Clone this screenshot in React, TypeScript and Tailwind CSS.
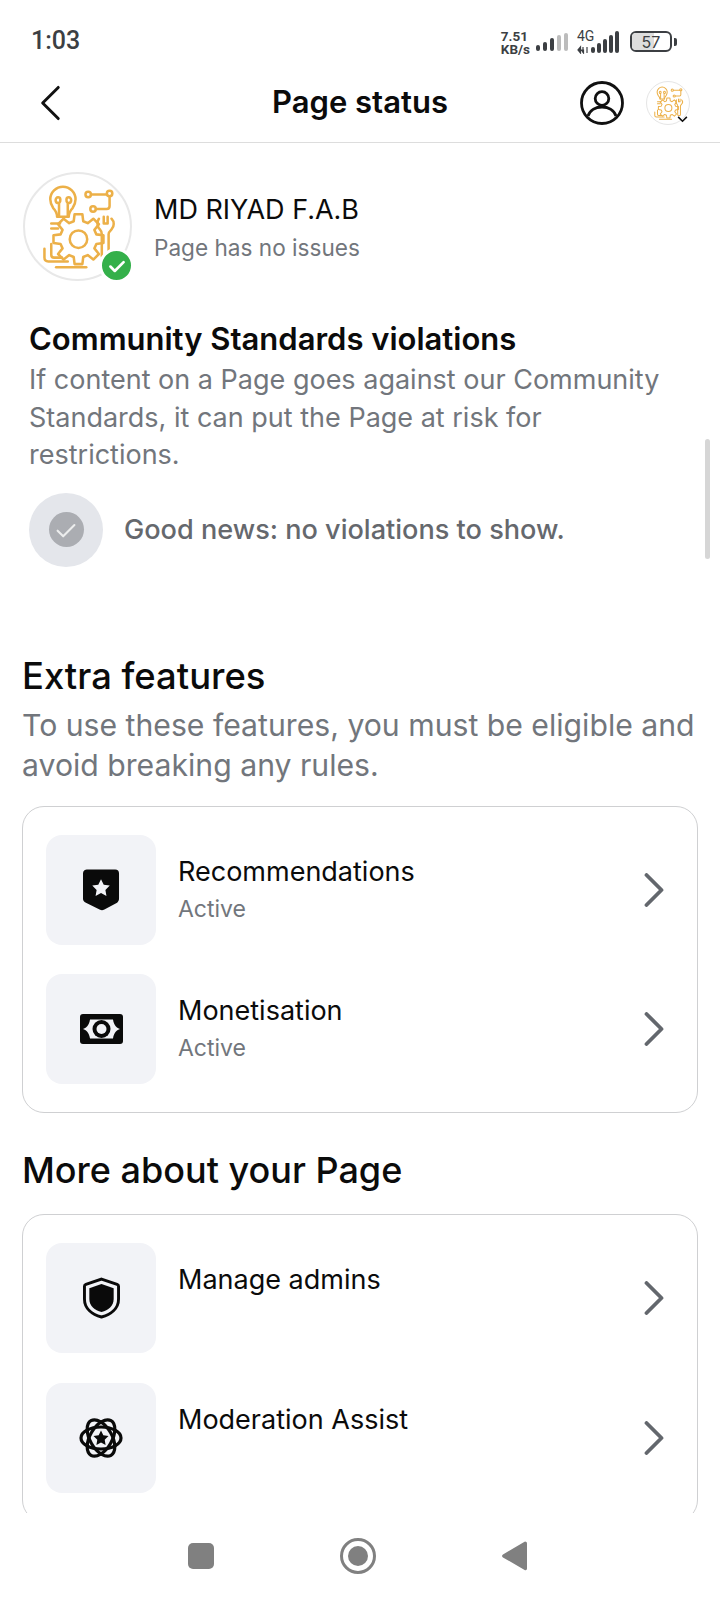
import type { ReactNode } from "react";

// builds the cog outline for the logo
function gearPath(cx: number, cy: number, outer: number, inner: number, teeth: number) {
  const pts: string[] = [];
  const step = (Math.PI * 2) / teeth;
  for (let i = 0; i < teeth; i++) {
    const a = i * step - Math.PI / 2;
    const offs: [number, number][] = [
      [-0.3, inner],
      [-0.18, outer],
      [0.18, outer],
      [0.3, inner],
    ];
    for (const [o, r] of offs) {
      const t = a + o * step * 1.1;
      pts.push(`${(cx + Math.cos(t) * r).toFixed(1)} ${(cy + Math.sin(t) * r).toFixed(1)}`);
    }
  }
  return "M" + pts.join("L") + "Z";
}

function PageLogo({ className }: { className: string }) {
  return (
    <svg viewBox="0 0 108 108" className={className} fill="none" stroke="#ecb048" strokeWidth="2.600" strokeLinecap="round" strokeLinejoin="round">
      {/* bulb */}
      <path d="M33 44c0-5-2-7-4-9-2-3-3-6-3-9 0-7 6-13 13-13s13 6 13 13c0 3-1 6-3 9-2 2-4 4-4 9z" />
      <path d="M35 44V30M44 44V30M35 30c-5 0-4-6-1-6s3 4 1 6zM44 30c5 0 4-6 1-6s-3 4-1 6z" />
      <path d="M27 51h9M27 56h7" />
      {/* circuit */}
      <circle cx="65" cy="21" r="2.800" />
      <circle cx="87" cy="20" r="2.800" />
      <circle cx="70" cy="36" r="2.800" />
      <path d="M68 21h16M73 36h11c2 0 3-1 3-3V23" />
      {/* gear */}
      <path d={gearPath(55, 67, 26, 19, 8)} />
      <circle cx="55" cy="67" r="9" />
      {/* wrench */}
      <path d="M76 46c-2 3-2 8 1 11 1 1 2 3 2 5v22M89 46c3 3 3 8 0 11-1 1-3 3-3 5v22M79 84c0 3 7 3 7 0" />
      <path d="M81 44v7h4v-7" />
      {/* traces */}
      <path d="M20 77v9c0 3 2 4 4 4h20" />
      <path d="M27 72v11c0 2 1 3 3 3h8" />
      <path d="M32 96h31" />
    </svg>
  );
}

function Row({ icon, title, sub }: { icon: ReactNode; title: string; sub?: string }) {
  return (
    <div className="flex items-center">
      <div className="flex h-[110px] w-[110px] shrink-0 items-center justify-center rounded-[16px] bg-[#f2f3f7]">{icon}</div>
      <div className="ml-[22px] h-[110px] flex-1 pt-[19px]">
        <div className="text-[27px] leading-[36px] text-[#0b0b0b]">{title}</div>
        {sub && <div className="mt-[1px] text-[23px] leading-[36px] text-[#72767c]">{sub}</div>}
      </div>
      <svg viewBox="0 0 20 34" className="mr-[33px] h-[34px] w-[20px] shrink-0" fill="none" stroke="#63676d" strokeWidth="3.800" strokeLinecap="round" strokeLinejoin="round">
        <path d="M2.500 2 17.500 17 2.500 32" />
      </svg>
    </div>
  );
}

export default function App() {
  return (
    <div className="relative flex h-[1600px] w-[720px] flex-col overflow-hidden bg-white font-['Inter','Noto_Sans',sans-serif]">
      {/* status bar */}
      <div className="flex h-[70px] shrink-0 items-start justify-between pl-[31px] pr-[43px] pt-[23px] text-[#3c3f43]">
        <span className="font-['Roboto',sans-serif] text-[25px] leading-[36px] font-medium">1:03</span>
        <div className="flex items-center pt-[4px]">
          <div className="mt-[3px] font-['Roboto',sans-serif] text-[13.500px] leading-[13px] font-bold">
            <div>7.51</div>
            <div>KB/s</div>
          </div>
          <svg viewBox="0 0 34 20" className="ml-[5px] h-[20px] w-[34px]" fill="currentColor">
            <rect x="1" y="13" width="4" height="6" rx="2" />
            <rect x="8" y="10" width="4" height="9" rx="2" />
            <rect x="15" y="6" width="4" height="13" rx="2" />
            <rect x="22" y="3" width="4" height="16" rx="2" fill="#bcbcbc" />
            <rect x="29" y="1" width="4" height="18" rx="2" fill="#bcbcbc" />
          </svg>
          <div className="relative ml-[8px] h-[24px] w-[44px]">
            <span className="absolute -top-[1px] left-0 font-['Roboto',sans-serif] text-[14px] leading-[14px]">4G</span>
            <svg viewBox="0 0 44 24" className="absolute inset-0 h-[24px] w-[44px]" fill="currentColor">
              <path d="M1 20l2.500-3v6zM6.500 23l-2-3h2zM6 17v6M10 17v6" stroke="currentColor" strokeWidth="1.200" />
              <rect x="14" y="17" width="4" height="6" rx="2" />
              <rect x="20" y="13" width="4" height="10" rx="2" />
              <rect x="26" y="9" width="4" height="14" rx="2" />
              <rect x="32" y="5" width="4" height="18" rx="2" />
              <rect x="38" y="1" width="4" height="22" rx="2" />
            </svg>
          </div>
          <div className="relative ml-[9px] flex h-[21px] w-[42px] items-center justify-center overflow-hidden rounded-[6px] border-2 border-[#3c3f43] text-[16px] leading-none">
            <div className="absolute inset-y-0 left-0 w-[57%] bg-[#dedede]" />
            <span className="relative">57</span>
          </div>
          <div className="ml-[2px] h-[8px] w-[3px] rounded-r-[2px] bg-[#3c3f43]" />
        </div>
      </div>

      {/* header */}
      <header className="relative flex h-[73px] shrink-0 items-start justify-between border-b border-[#dddddd] pl-[39px] pr-[30px]">
        <svg viewBox="0 0 24 40" className="mt-[14px] h-[38px] w-[22px]" fill="none" stroke="#111" strokeWidth="3.200" strokeLinecap="round" strokeLinejoin="round">
          <path d="M21 3 4 20l17 17" />
        </svg>
        <h1 className="absolute left-0 right-0 top-[12px] text-center text-[31px] leading-[40px] font-semibold text-[#0b0b0b]">Page status</h1>
        <div className="mt-[11px] flex items-center gap-[22px]">
          <svg viewBox="0 0 44 44" className="h-[44px] w-[44px]" fill="none" stroke="#111" strokeWidth="2.800">
            <circle cx="22" cy="22" r="20.500" />
            <circle cx="22" cy="17.500" r="6.800" />
            <path d="M8 35c2-6 8-9 14-9s12 3 14 9" />
          </svg>
          <div className="relative h-[44px] w-[44px] rounded-full border border-[#e5e5e5]">
            <PageLogo className="h-full w-full" />
            <svg viewBox="0 0 12 8" className="absolute bottom-[1px] right-[1px] h-[7px] w-[11px]" fill="none" stroke="#111" strokeWidth="1.800">
              <path d="M1 1l5 5 5-5" />
            </svg>
          </div>
        </div>
      </header>

      <main className="relative min-h-0 flex-1 overflow-hidden">
        {/* page status */}
        <div className="flex items-center pl-[23px] pt-[29px]">
          <div className="relative h-[109px] w-[109px] shrink-0 rounded-full border-2 border-[#e8e8e8]">
            <PageLogo className="h-full w-full" />
            <div className="absolute -bottom-[4px] -right-[4px] flex h-[35px] w-[35px] items-center justify-center rounded-full border-[3px] border-white bg-[#34b04a]">
              <svg viewBox="0 0 20 20" className="h-[22px] w-[22px]" fill="none" stroke="#fff" strokeWidth="2.400" strokeLinecap="round" strokeLinejoin="round">
                <path d="M4 10.500l4 4 8-8" />
              </svg>
            </div>
          </div>
          <div className="ml-[22px] pt-[4px]">
            <div className="text-[27px] leading-[38px] text-[#0b0b0b]">MD RIYAD F.A.B</div>
            <div className="text-[22.600px] leading-[38px] text-[#72767c]">Page has no issues</div>
          </div>
        </div>

        {/* violations */}
        <section className="mt-[39px] pl-[29px] pr-[40px]">
          <h2 className="text-[31px] leading-[38px] font-semibold text-[#0b0b0b]">Community Standards violations</h2>
          <p className="mt-[3px] text-[27px] leading-[37.500px] text-[#72767c]">
            If content on a Page goes against our Community Standards, it can put the Page at risk for restrictions.
          </p>
          <div className="mt-[19px] flex items-center">
            <div className="flex h-[74px] w-[74px] items-center justify-center rounded-full bg-[#e4e6eb]">
              <div className="flex h-[35px] w-[35px] items-center justify-center rounded-full bg-[#abadb2]">
                <svg viewBox="0 0 20 20" className="h-[28px] w-[28px] shrink-0" fill="none" stroke="#eceded" strokeWidth="1.500" strokeLinecap="round" strokeLinejoin="round">
                  <path d="M4 10.500l4 4 8-8" />
                </svg>
              </div>
            </div>
            <span className="ml-[21px] pt-[1px] text-[27.100px] leading-[38px] font-medium text-[#65686d]">Good news: no violations to show.</span>
          </div>
        </section>

        {/* extra features */}
        <section className="mt-[86px] px-[22px]">
          <h2 className="text-[36.400px] leading-[46px] font-medium text-[#0b0b0b]">Extra features</h2>
          <p className="mt-[6px] -mr-[6px] text-[30.200px] leading-[40px] text-[#72767c]">To use these features, you must be eligible and avoid breaking any rules.</p>
          <div className="mt-[21px] flex flex-col gap-[29px] rounded-[22px] border border-[#cfd0d2] py-[28px] pl-[23px]">
            <Row
              title="Recommendations"
              sub="Active"
              icon={
                <svg viewBox="0 0 38 42" className="h-[42px] w-[37px]">
                  <path d="M5 0h28a4 4 0 0 1 4 4v26c0 2-1 3-2 4l-13 7c-2 1-3 1-5 0L3 34c-2-1-3-2-3-4V4a4 4 0 0 1 5-4z" fill="#0a0a0a" />
                  <path d="M18.500 10l2.800 5.600 6.200.9-4.500 4.400 1.100 6.200-5.600-2.900-5.600 2.900 1.100-6.200-4.500-4.400 6.200-.9z" fill="#f2f3f7" />
                </svg>
              }
            />
            <Row
              title="Monetisation"
              sub="Active"
              icon={
                <svg viewBox="0 0 43 30" className="h-[30px] w-[43px]">
                  <rect width="43" height="30" rx="3" fill="#0a0a0a" />
                  <path d="M3 15c3-1 6-3 7-9.500h23c1 6.500 4 8.500 7 9.500-3 1-6 3-7 9.500H10C9 18 6 16 3 15z" fill="#f2f3f7" />
                  <circle cx="21.500" cy="15" r="9" fill="#0a0a0a" />
                  <circle cx="21.500" cy="15" r="5" fill="#f2f3f7" />
                </svg>
              }
            />
          </div>
        </section>

        {/* more about */}
        <section className="mt-[34px] px-[22px]">
          <h2 className="text-[36px] leading-[46px] font-medium text-[#0b0b0b]">More about your Page</h2>
          <div className="mt-[21px] flex flex-col gap-[30px] rounded-[22px] border border-[#cfd0d2] py-[28px] pl-[23px]">
            <Row
              title="Manage admins"
              icon={
                <svg viewBox="0 0 38 42" className="h-[42px] w-[37px]">
                  <path d="M19 1.500 35 7c1 .4 1.500 1 1.500 2v13c0 10-8 16-17.500 18.500C9.500 38 1.500 32 1.500 22V9c0-1 .5-1.600 1.500-2z" fill="none" stroke="#0a0a0a" strokeWidth="3" />
                  <path d="M19 6.500 31.500 11v11c0 7-5.500 11.500-12.500 13.500C12 33.500 6.500 29 6.500 22V11z" fill="#0a0a0a" />
                </svg>
              }
            />
            <Row
              title="Moderation Assist"
              icon={
                <svg viewBox="0 0 44 42" className="h-[42px] w-[44px]" fill="none" stroke="#0a0a0a" strokeWidth="3.200">
                  <ellipse cx="22" cy="21" rx="20" ry="11" />
                  <ellipse cx="22" cy="21" rx="20" ry="11" transform="rotate(60 22 21)" />
                  <ellipse cx="22" cy="21" rx="20" ry="11" transform="rotate(120 22 21)" />
                  <path d="M22 13.500l2.300 4.800 5.200.7-3.800 3.700.9 5.300-4.600-2.500-4.600 2.500.9-5.300-3.800-3.700 5.200-.7z" fill="#0a0a0a" stroke="none" />
                </svg>
              }
            />
          </div>
        </section>

        {/* scrollbar */}
        <div className="absolute right-[10px] top-[296px] h-[120px] w-[5px] rounded-full bg-[#d6d6d6]" />
      </main>

      {/* nav bar */}
      <nav className="relative flex h-[87px] shrink-0 items-center justify-center bg-white pb-[2px] pr-[6px]">
        <div className="h-[26px] w-[26px] rounded-[5px] bg-[#808080]" />
        <div className="ml-[126px] flex h-[36px] w-[36px] items-center justify-center rounded-full border-[3px] border-[#808080]">
          <div className="h-[20px] w-[20px] rounded-full bg-[#808080]" />
        </div>
        <svg viewBox="0 0 26 30" className="ml-[126px] h-[30px] w-[25px]" fill="#808080">
          <path d="M24 0c1 0 2 .7 2 2v26c0 1.500-1.200 2.300-2.500 1.500L1 16.500c-1.300-.8-1.300-2.200 0-3L23 .4z" />
        </svg>
      </nav>
    </div>
  );
}
